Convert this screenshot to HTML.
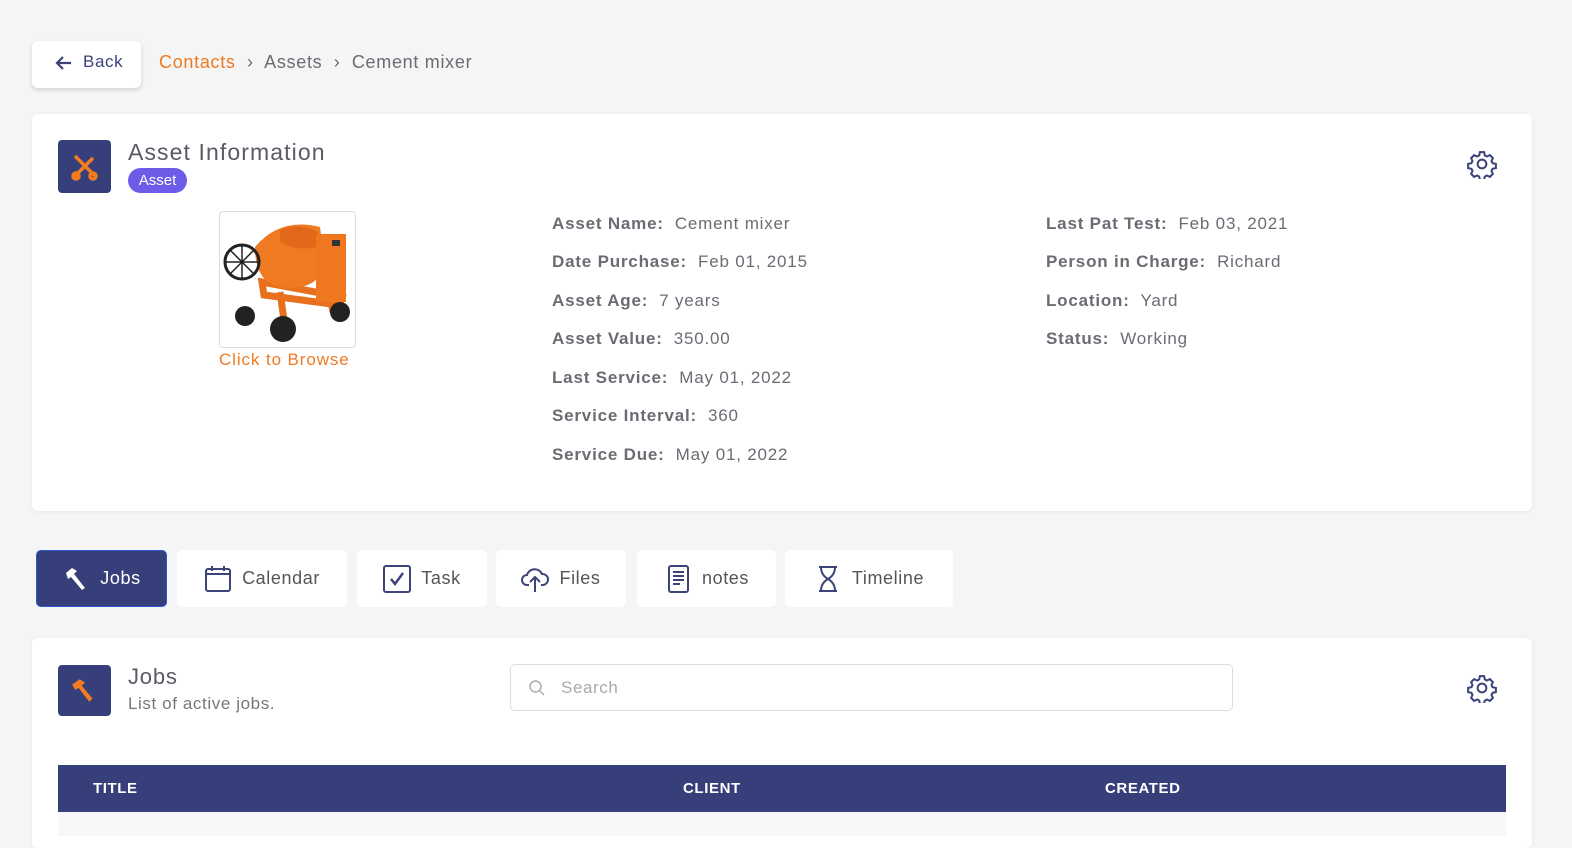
<!DOCTYPE html>
<html><head><style>
*{box-sizing:border-box;margin:0;padding:0}
body{width:1572px;height:836px;background:#f5f5f5;font-family:"Liberation Sans",sans-serif;color:#6b6b74;position:relative;overflow:hidden}
.abs{position:absolute}
.card{position:absolute;background:#fff;border-radius:6px;box-shadow:0 1px 4px rgba(0,0,0,.05)}
.lab{font-weight:bold;color:#6b6b74}
.row{position:absolute;font-size:17px;white-space:nowrap;letter-spacing:.8px}
.tab{position:absolute;top:550px;height:57px;background:#fff;border-radius:5px;font-size:18px;color:#555;display:flex;align-items:center;justify-content:center;gap:10px;letter-spacing:.6px}
</style></head><body>
<div class="card" style="left:32px;top:41px;width:109px;height:47px;box-shadow:0 2px 5px rgba(0,0,0,.15);border-radius:6px"></div>
<svg class="abs" style="left:55px;top:55px" width="18" height="16" viewBox="0 0 18 16"><path d="M16 8H3M8 2L2 8l6 6" stroke="#3b4379" stroke-width="2.2" fill="none"/></svg>
<div class="abs" style="left:83px;top:52px;font-size:17px;color:#3b4379;letter-spacing:.6px">Back</div>
<div class="abs" style="left:159px;top:52px;font-size:18px;color:#6b6b74;white-space:nowrap;letter-spacing:.7px"><span style="color:#ef7a22">Contacts</span> &nbsp;›&nbsp; Assets &nbsp;›&nbsp; Cement mixer</div>

<div class="card" style="left:32px;top:114px;width:1500px;height:397px"></div>
<div class="abs" style="left:58px;top:140px;width:53px;height:53px;background:#373f7a;border-radius:4px"></div>
<svg class="abs" style="left:68px;top:150px" width="33" height="33" viewBox="0 0 33 33"><g stroke="#f47c20" stroke-width="3.5" fill="none" stroke-linecap="round"><path d="M7 26L24 9"/><path d="M8 7l18 18"/><circle cx="8" cy="26" r="3"/><circle cx="25" cy="26" r="3"/></g></svg>
<div class="abs" style="left:128px;top:139px;font-size:23px;color:#5a5a66;letter-spacing:1.1px">Asset Information</div>
<div class="abs" style="left:128px;top:168px;width:59px;height:25px;background:#6d5ce7;border-radius:13px;color:#fff;font-size:15px;text-align:center;line-height:25px">Asset</div>
<svg class="abs" style="left:1467px;top:149px" width="30" height="30" viewBox="0 0 24 24"><path fill="none" stroke="#3b4379" stroke-width="1.6" d="M12 8.5a3.5 3.5 0 1 0 0 7a3.5 3.5 0 1 0 0-7zM10.3 2.5h3.4l.5 2.6 1.7.9 2.4-1.1 2.4 2.4-1.1 2.4.9 1.7 2.6.5v3.4l-2.6.5-.9 1.7 1.1 2.4-2.4 2.4-2.4-1.1-1.7.9-.5 2.6h-3.4l-.5-2.6-1.7-.9-2.4 1.1-2.4-2.4 1.1-2.4-.9-1.7-2.6-.5v-3.4l2.6-.5.9-1.7-1.1-2.4 2.4-2.4 2.4 1.1 1.7-.9z"/></svg>

<div class="abs" style="left:219px;top:211px;width:137px;height:137px;border:1px solid #ddd;border-radius:4px;background:#fff;overflow:hidden">
<svg width="137" height="137" viewBox="0 0 137 137"><path d="M42 70l80 15-3 8-75-10zM60 80l5 35M110 85l3 15" stroke="#e8701c" stroke-width="7" fill="none"/><path d="M35 35q25-30 65-20l5 40q-10 25-45 20q-25-5-25-40z" fill="#f07a22"/><path d="M60 18q20-8 38 2l-2 15q-18 5-36-5z" fill="#e06818"/><rect x="96" y="22" width="30" height="68" fill="#ef7720"/><rect x="112" y="28" width="8" height="6" fill="#333"/><circle cx="22" cy="50" r="17" fill="none" stroke="#222" stroke-width="3"/><path d="M22 33v34M5 50h34M10 38l24 24M34 38L10 62" stroke="#222" stroke-width="1.5"/><circle cx="25" cy="104" r="10" fill="#222"/><circle cx="63" cy="117" r="13" fill="#222"/><circle cx="120" cy="100" r="10" fill="#222"/></svg></div>
<div class="abs" style="left:219px;top:350px;font-size:17px;color:#ef7a22;letter-spacing:.9px">Click to Browse</div>

<div class="row" style="left:552px;top:214px"><span class="lab">Asset Name:</span>&nbsp; Cement mixer</div>
<div class="row" style="left:552px;top:252px"><span class="lab">Date Purchase:</span>&nbsp; Feb 01, 2015</div>
<div class="row" style="left:552px;top:291px"><span class="lab">Asset Age:</span>&nbsp; 7 years</div>
<div class="row" style="left:552px;top:329px"><span class="lab">Asset Value:</span>&nbsp; 350.00</div>
<div class="row" style="left:552px;top:368px"><span class="lab">Last Service:</span>&nbsp; May 01, 2022</div>
<div class="row" style="left:552px;top:406px"><span class="lab">Service Interval:</span>&nbsp; 360</div>
<div class="row" style="left:552px;top:445px"><span class="lab">Service Due:</span>&nbsp; May 01, 2022</div>
<div class="row" style="left:1046px;top:214px"><span class="lab">Last Pat Test:</span>&nbsp; Feb 03, 2021</div>
<div class="row" style="left:1046px;top:252px"><span class="lab">Person in Charge:</span>&nbsp; Richard</div>
<div class="row" style="left:1046px;top:291px"><span class="lab">Location:</span>&nbsp; Yard</div>
<div class="row" style="left:1046px;top:329px"><span class="lab">Status:</span>&nbsp; Working</div>

<div class="tab" style="left:36px;width:131px;background:#373f7a;color:#fff;border:1px solid #2a56d8"><svg width="28" height="28" viewBox="0 0 28 28"><path d="M4 8l6-5 5 3-3 3 11 14-3 2-11-13-3 2z" fill="#fff"/></svg>Jobs</div>
<div class="tab" style="left:177px;width:170px"><svg width="28" height="28" viewBox="0 0 28 28"><rect x="2" y="4" width="24" height="22" rx="2" fill="none" stroke="#3b4379" stroke-width="2"/><path d="M2 9h24M8 1v5M20 1v5" stroke="#3b4379" stroke-width="2"/></svg>Calendar</div>
<div class="tab" style="left:357px;width:130px"><svg width="28" height="28" viewBox="0 0 28 28"><rect x="1" y="1" width="26" height="26" rx="2" fill="none" stroke="#3b4379" stroke-width="2"/><path d="M8 14l4 5 8-11" stroke="#3b4379" stroke-width="2.5" fill="none"/></svg>Task</div>
<div class="tab" style="left:496px;width:130px"><svg width="28" height="28" viewBox="0 0 28 28"><path d="M8 20H6a5 5 0 0 1 0-10 8 8 0 0 1 15-1 5.5 5.5 0 0 1 1 11h-2M14 27V12M9 17l5-5 5 5" stroke="#3b4379" stroke-width="2" fill="none"/></svg>Files</div>
<div class="tab" style="left:637px;width:139px"><svg width="28" height="28" viewBox="0 0 28 28"><rect x="5" y="1" width="19" height="26" rx="2" fill="none" stroke="#3b4379" stroke-width="2"/><path d="M9 7h11M9 11h11M9 15h11M9 19h7" stroke="#3b4379" stroke-width="2"/></svg>notes</div>
<div class="tab" style="left:785px;width:168px"><svg width="28" height="28" viewBox="0 0 28 28"><path d="M5 2h18M5 26h18M7 2q0 8 7 12q-7 4-7 12M21 2q0 8-7 12q7 4 7 12" stroke="#3b4379" stroke-width="2" fill="none"/></svg>Timeline</div>

<div class="card" style="left:32px;top:638px;width:1500px;height:210px"></div>
<div class="abs" style="left:58px;top:665px;width:53px;height:51px;background:#373f7a;border-radius:4px"></div>
<svg class="abs" style="left:70px;top:675px" width="30" height="30" viewBox="0 0 28 28"><path d="M2 9l7-5 5 3-3 3 10 12-3 3-10-13-3 2z" fill="#f47c20"/></svg>
<div class="abs" style="left:128px;top:664px;font-size:22px;color:#5a5a66;letter-spacing:.8px">Jobs</div>
<div class="abs" style="left:128px;top:694px;font-size:17px;color:#777;letter-spacing:.6px">List of active jobs.</div>
<div class="abs" style="left:510px;top:664px;width:723px;height:47px;border:1px solid #ddd;border-radius:5px;background:#fff"></div>
<svg class="abs" style="left:528px;top:679px" width="18" height="18" viewBox="0 0 18 18"><circle cx="7.5" cy="7.5" r="5.5" fill="none" stroke="#aaa" stroke-width="1.5"/><path d="M12 12l4 4" stroke="#aaa" stroke-width="1.5"/></svg>
<div class="abs" style="left:561px;top:678px;font-size:17px;color:#aaa;letter-spacing:.6px">Search</div>
<svg class="abs" style="left:1467px;top:673px" width="30" height="30" viewBox="0 0 24 24"><path fill="none" stroke="#3b4379" stroke-width="1.6" d="M12 8.5a3.5 3.5 0 1 0 0 7a3.5 3.5 0 1 0 0-7zM10.3 2.5h3.4l.5 2.6 1.7.9 2.4-1.1 2.4 2.4-1.1 2.4.9 1.7 2.6.5v3.4l-2.6.5-.9 1.7 1.1 2.4-2.4 2.4-2.4-1.1-1.7.9-.5 2.6h-3.4l-.5-2.6-1.7-.9-2.4 1.1-2.4-2.4 1.1-2.4-.9-1.7-2.6-.5v-3.4l2.6-.5.9-1.7-1.1-2.4 2.4-2.4 2.4 1.1 1.7-.9z"/></svg>
<div class="abs" style="left:58px;top:765px;width:1448px;height:47px;background:#373f7a;color:#fff;font-weight:bold;font-size:15px;line-height:47px;letter-spacing:.6px">
<span class="abs" style="left:35px">TITLE</span><span class="abs" style="left:625px">CLIENT</span><span class="abs" style="left:1047px">CREATED</span></div>
<div class="abs" style="left:58px;top:812px;width:1448px;height:24px;background:#f7f7f9"></div>
</body></html>
